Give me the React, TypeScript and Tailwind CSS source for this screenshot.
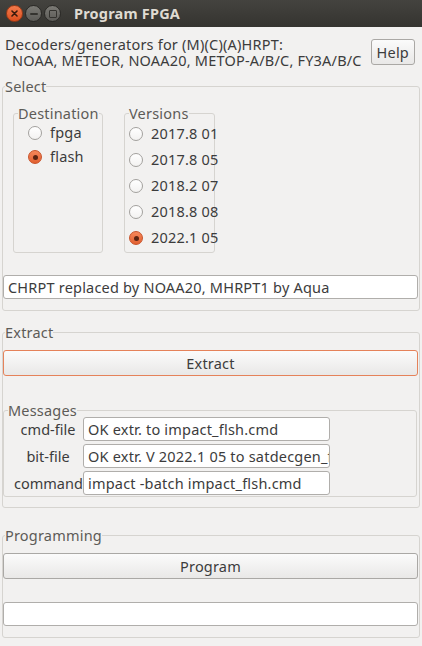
import React from "react";

const font = { fontFamily: '"Noto Sans", "Open Sans", "DejaVu Sans", sans-serif' };

function Radio({ checked, label }: { checked?: boolean; label: string }) {
  return (
    <div className="flex items-center gap-[8px] whitespace-nowrap">
      {checked ? (
        <span className="flex h-[14px] w-[14px] shrink-0 items-center justify-center rounded-full border border-[#c8532a] bg-gradient-to-b from-[#f5875a] to-[#e2602f]">
          <span className="h-[5px] w-[5px] rounded-full bg-[#5a2412]" />
        </span>
      ) : (
        <span className="h-[14px] w-[14px] shrink-0 rounded-full border border-[#a3a19e] bg-gradient-to-b from-[#ffffff] to-[#f3f2f1]" />
      )}
      <span>{label}</span>
    </div>
  );
}

function Entry({ text, className = "" }: { text?: string; className?: string }) {
  return (
    <div
      className={`h-[24px] overflow-hidden whitespace-nowrap rounded-[3px] border border-[#b0aeab] bg-white px-[4px] leading-[22px] text-[#3c3c3c] ${className}`}
    >
      {text}
    </div>
  );
}

function Button({ label, focused }: { label: string; focused?: boolean }) {
  return (
    <div
      className={`h-[26px] rounded-[3px] border bg-gradient-to-b from-[#fbfbfb] to-[#e9e8e7] text-center leading-[24px] text-[#3c3c3c] ${
        focused ? "border-[#e5825a]" : "border-[#aaa8a5]"
      }`}
    >
      {label}
    </div>
  );
}

function Frame({
  title,
  className = "",
  legendClass = "ml-[2px] leading-[16px]",
  children,
}: {
  title: string;
  className?: string;
  legendClass?: string;
  children: React.ReactNode;
}) {
  return (
    <fieldset className={`min-w-0 rounded-[3px] border border-[#d6d4d0] ${className}`}>
      <legend className={`px-0 text-[#5d5b57] ${legendClass}`}>{title}</legend>
      {children}
    </fieldset>
  );
}

export default function App() {
  const versions = ["2017.8 01", "2017.8 05", "2018.2 07", "2018.8 08", "2022.1 05"];
  const messages = [
    { label: "cmd-file", value: "OK extr. to impact_flsh.cmd" },
    { label: "bit-file", value: "OK extr. V 2022.1 05 to satdecgen_flsh.bit" },
    { label: "command", value: "impact -batch impact_flsh.cmd" },
  ];

  return (
    <div
      className="h-[646px] w-[422px] overflow-hidden bg-[#f2f1f0] text-[14.5px] tracking-[0.2px] text-[#3c3c3c]"
      style={font}
    >
      {/* Title bar */}
      <div className="flex h-[27px] items-center bg-gradient-to-b from-[#44433f] to-[#353430]">
        <div className="ml-[6px] flex items-center gap-[2px]">
          <span className="flex h-[17px] w-[17px] items-center justify-center rounded-full border border-[#9c3a16] bg-gradient-to-b from-[#f37a4b] to-[#dc4f1d]">
            <svg width="7" height="7" viewBox="0 0 7 7">
              <path d="M1 1L6 6M6 1L1 6" stroke="#3a1a0c" strokeWidth="1.6" strokeLinecap="round" />
            </svg>
          </span>
          <span className="flex h-[17px] w-[17px] items-center justify-center rounded-full border border-[#2a2926] bg-gradient-to-b from-[#7b7a75] to-[#5c5b57]">
            <span className="h-[2px] w-[8px] rounded-[1px] bg-[#34332f]" />
          </span>
          <span className="flex h-[17px] w-[17px] items-center justify-center rounded-full border border-[#2a2926] bg-gradient-to-b from-[#7b7a75] to-[#5c5b57]">
            <span className="h-[8px] w-[8px] rounded-[1px] border-[1.5px] border-[#34332f]" />
          </span>
        </div>
        <span className="ml-[13px] text-[14.5px] font-bold text-[#dfdbd2]">Program FPGA</span>
      </div>

      {/* Header */}
      <div className="flex items-start justify-between pl-[5px] pr-[7px] pt-[9px]">
        <div className="leading-[16px]">
          <div>Decoders/generators for (M)(C)(A)HRPT:</div>
          <div className="pl-[7px]">NOAA, METEOR, NOAA20, METOP-A/B/C, FY3A/B/C</div>
        </div>
        <div className="mt-[3px] h-[26px] rounded-[3px] border border-[#aaa8a5] bg-gradient-to-b from-[#fbfbfb] to-[#e9e8e7] px-[5px] leading-[24px]">
          Help
        </div>
      </div>

      {/* Select */}
      <Frame title="Select" className="mx-[2px] mt-[10px] pb-[11px] pr-[1px]">
        <div className="mt-[11px] flex gap-[21px] pl-[10px]">
          <Frame title="Destination" className="w-[90px] pl-[14px]" legendClass="-ml-[10px] leading-[16px]">
            <div className="flex h-[24px] items-center">
              <Radio label="fpga" />
            </div>
            <div className="flex h-[24px] items-center">
              <Radio checked label="flash" />
            </div>
          </Frame>
          <Frame title="Versions" className="w-[91px] pb-[1px] pl-[4px]" legendClass="ml-0 leading-[16px]">
            {versions.map((v, i) => (
              <div key={v} className="flex h-[26px] items-center">
                <Radio checked={i === versions.length - 1} label={v} />
              </div>
            ))}
          </Frame>
        </div>
        <Entry text="CHRPT replaced by NOAA20, MHRPT1 by Aqua" className="mt-[22px]" />
      </Frame>

      {/* Extract */}
      <Frame title="Extract" className="mx-[2px] mt-[13px] pb-[10px] pr-[1px]">
        <div className="mt-[10px]">
          <Button label="Extract" focused />
        </div>
        <Frame
          title="Messages"
          className="mr-[1px] mt-[27px] pb-[1px] pl-[10px]"
          legendClass="-ml-[6px] leading-[14px]"
        >
          <div className="grid grid-cols-[68px_248px] gap-y-[3px]">
            {messages.map((m) => (
              <React.Fragment key={m.label}>
                <div className="whitespace-nowrap text-center leading-[24px] tracking-normal">{m.label}</div>
                <Entry text={m.value} className="ml-[1px]" />
              </React.Fragment>
            ))}
          </div>
        </Frame>
      </Frame>

      {/* Programming */}
      <Frame title="Programming" className="mx-[2px] mt-[19px] pb-[11px] pr-[1px]">
        <div className="mt-[10px]">
          <Button label="Program" />
        </div>
        <Entry className="mt-[23px]" />
      </Frame>
    </div>
  );
}
